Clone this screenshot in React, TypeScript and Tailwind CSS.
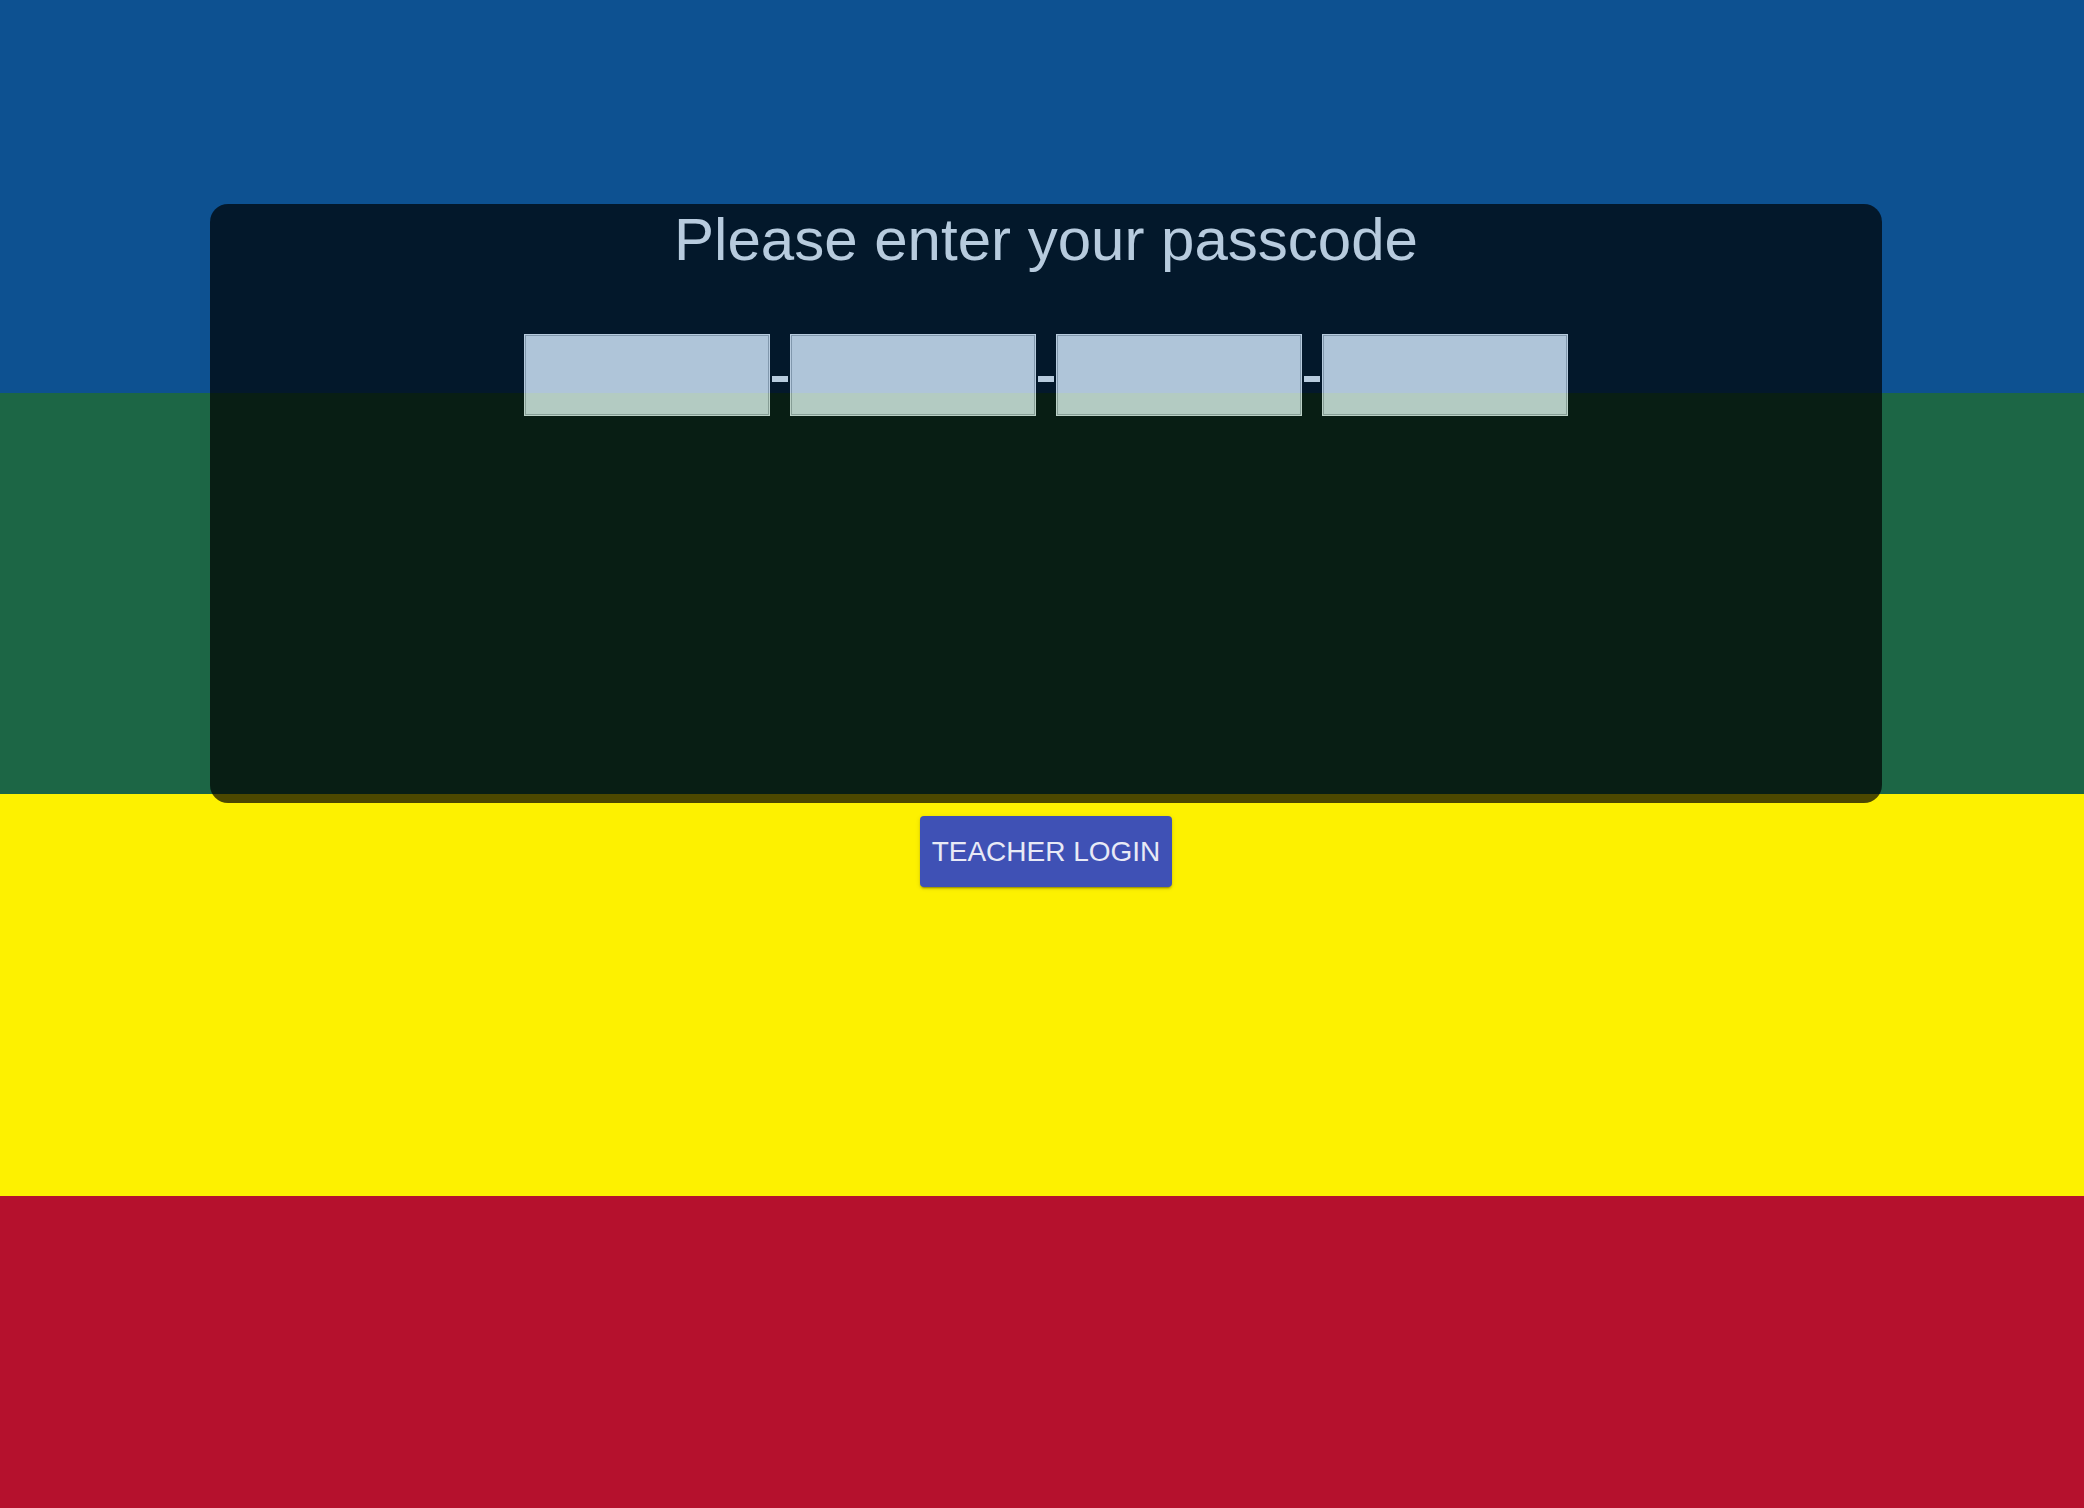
import React from "react";

function CodeBox() {
  return (
    <div className="w-[246px] h-[82px] border border-white bg-[#f4f6f8] shadow-[inset_0_0_0_1px_#b3b6b9]" />
  );
}

function Dash() {
  return <div className="mx-[2px] mt-[8px] w-[16px] h-[6px] bg-white" />;
}

export default function App() {
  return (
    <div
      className="relative w-full h-[1508px] overflow-hidden"
      style={{ fontFamily: '"Liberation Sans", Arial, Helvetica, sans-serif' }}
    >
      <div className="flex flex-col h-full">
        <div className="h-[393px] bg-[#0d5191]" />
        <div className="h-[401px] bg-[#1c6645]" />
        <div className="h-[402px] bg-[#fdf100]" />
        <div className="flex-1 bg-[#b5112d]" />
      </div>

      <div className="absolute inset-0 flex flex-col items-center pt-[204px] pl-[8px]">
        <div className="w-[1672px] h-[599px] rounded-[18px] bg-black opacity-70 flex flex-col items-center">
          <h1 className="mt-[6px] text-[60px] leading-none font-normal text-white">
            Please enter your passcode
          </h1>
          <div className="mt-[64px] flex items-center">
            <CodeBox />
            <Dash />
            <CodeBox />
            <Dash />
            <CodeBox />
            <Dash />
            <CodeBox />
          </div>
        </div>

        <button
          type="button"
          className="mt-[13px] h-[71px] px-[12px] rounded-[4px] bg-[#3f51b5] text-[#e8eaf6] text-[28px] leading-none uppercase shadow-[0_3px_1px_-2px_rgba(0,0,0,0.2),0_2px_2px_0_rgba(0,0,0,0.14),0_1px_5px_0_rgba(0,0,0,0.12)]"
        >
          Teacher Login
        </button>
      </div>
    </div>
  );
}
